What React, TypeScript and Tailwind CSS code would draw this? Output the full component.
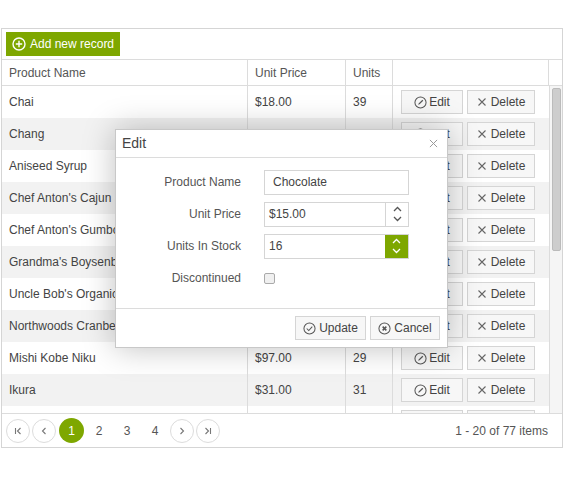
import React from "react";

const rows = [
  ["Chai", "$18.00", "39"],
  ["Chang", "$19.00", "17"],
  ["Aniseed Syrup", "$10.00", "13"],
  ["Chef Anton's Cajun Seasoning", "$22.00", "53"],
  ["Chef Anton's Gumbo Mix", "$21.35", "0"],
  ["Grandma's Boysenberry Spread", "$25.00", "120"],
  ["Uncle Bob's Organic Dried Pears", "$30.00", "15"],
  ["Northwoods Cranberry Sauce", "$40.00", "6"],
  ["Mishi Kobe Niku", "$97.00", "29"],
  ["Ikura", "$31.00", "31"],
  ["Queso Cabrales", "$21.00", "22"],
];

const EditIcon = () => (
  <svg width="13" height="13" viewBox="0 0 14 14" fill="none" stroke="#555" strokeWidth="1.1">
    <circle cx="7" cy="7" r="6" />
    <path d="M4.5 9.5 L5 8 L9 4 L10 5 L6 9 Z" fill="#555" stroke="none" />
  </svg>
);
const XIcon = () => (
  <svg width="10" height="10" viewBox="0 0 10 10" stroke="#666" strokeWidth="1.1">
    <path d="M1.5 1.5 L8.5 8.5 M8.5 1.5 L1.5 8.5" />
  </svg>
);
const Chev = ({ up, color }: { up: boolean; color: string }) => (
  <svg width="9" height="6" viewBox="0 0 9 6" fill="none" stroke={color} strokeWidth="1.3">
    <path d={up ? "M1 5 L4.5 1.5 L8 5" : "M1 1 L4.5 4.5 L8 1"} />
  </svg>
);

export default function App() {
  return (
    <div className="w-[564px] h-[500px] bg-white relative text-[12px] text-[#444]" style={{ fontFamily: "'Liberation Sans', Arial, sans-serif" }}>
      <div className="absolute left-[1px] top-[28px] w-[562px] h-[420px] border border-[#d5d5d5] flex flex-col">
        <div className="h-[31px] flex items-center px-[4px] border-b border-[#dcdcdc]">
          <div className="h-[24px] bg-[#7ea700] text-white flex items-center gap-[4px] px-[6px] text-[12px]">
            <svg width="14" height="14" viewBox="0 0 14 14" fill="none" stroke="white" strokeWidth="1.4">
              <circle cx="7" cy="7" r="6" />
              <path d="M7 3.8 V10.2 M3.8 7 H10.2" />
            </svg>
            Add new record
          </div>
        </div>
        <div className="h-[26px] flex border-b border-[#dcdcdc] text-[#555]">
          <div className="w-[246px] px-[7px] flex items-center border-r border-[#dcdcdc]">Product Name</div>
          <div className="w-[98px] px-[7px] flex items-center border-r border-[#dcdcdc]">Unit Price</div>
          <div className="w-[47px] px-[7px] flex items-center border-r border-[#dcdcdc]">Units</div>
          <div className="w-[156px] border-r border-[#dcdcdc]"></div>
          <div className="flex-1"></div>
        </div>
        <div className="flex-1 flex overflow-hidden">
          <div className="w-[547px] overflow-hidden">
            {rows.map((r, i) => (
              <div key={i} className={`h-[32px] flex shrink-0 ${i % 2 ? "bg-[#f2f2f2]" : "bg-white"}`}>
                <div className="w-[246px] px-[7px] flex items-center border-r border-[#dcdcdc] whitespace-nowrap overflow-hidden">{r[0]}</div>
                <div className="w-[98px] px-[7px] flex items-center border-r border-[#dcdcdc]">{r[1]}</div>
                <div className="w-[47px] px-[7px] flex items-center border-r border-[#dcdcdc]">{r[2]}</div>
                <div className="w-[156px] flex items-center gap-[4px] pl-[8px]">
                  <div className="w-[62px] h-[24px] border border-[#d5d5d5] bg-[#f7f7f7] flex items-center justify-center gap-[2px]"><EditIcon />Edit</div>
                  <div className="w-[68px] h-[24px] border border-[#d5d5d5] bg-[#f7f7f7] flex items-center justify-center gap-[4px]"><XIcon />Delete</div>
                </div>
              </div>
            ))}
          </div>
          <div className="flex-1 bg-[#f5f5f5] border-l border-[#dcdcdc] pt-[2px] flex justify-center">
            <div className="w-[9px] h-[163px] bg-[#cdcdcd] rounded-[2px] border border-[#bbb]"></div>
          </div>
        </div>
        <div className="h-[34px] border-t border-[#dcdcdc] flex items-center pl-[4px] pr-[14px]">
          <div className="flex items-center gap-[2px]">
            {["first", "prev"].map((k) => (
              <div key={k} className="w-[24px] h-[24px] rounded-full border border-[#dcdcdc] flex items-center justify-center">
                <svg width="10" height="10" viewBox="0 0 10 10" fill="none" stroke="#777" strokeWidth="1.1">
                  {k === "first" ? <path d="M2.5 2 V8 M7.5 2 L4.5 5 L7.5 8" /> : <path d="M6.5 2 L3.5 5 L6.5 8" />}
                </svg>
              </div>
            ))}
            <div className="w-[25px] h-[25px] rounded-full bg-[#7ea700] text-white flex items-center justify-center ml-[1px]">1</div>
            {["2", "3", "4"].map((p) => (
              <div key={p} className="w-[26px] h-[24px] flex items-center justify-center text-[#555]">{p}</div>
            ))}
            {["next", "last"].map((k) => (
              <div key={k} className="w-[24px] h-[24px] rounded-full border border-[#dcdcdc] flex items-center justify-center">
                <svg width="10" height="10" viewBox="0 0 10 10" fill="none" stroke="#777" strokeWidth="1.1">
                  {k === "last" ? <path d="M7.5 2 V8 M2.5 2 L5.5 5 L2.5 8" /> : <path d="M3.5 2 L6.5 5 L3.5 8" />}
                </svg>
              </div>
            ))}
          </div>
          <div className="ml-auto text-[#555]">1 - 20 of 77 items</div>
        </div>
      </div>

      <div className="absolute left-[115px] top-[129px] w-[333px] h-[219px] bg-white border border-[#c8c8c8] shadow-[0_0_30px_rgba(0,0,0,0.25)] flex flex-col">
        <div className="h-[28px] border-b border-[#dcdcdc] flex items-center px-[6px] text-[14px] text-[#444]">
          Edit
          <svg className="ml-auto mr-[3px]" width="9" height="9" viewBox="0 0 10 10" stroke="#999" strokeWidth="1.1"><path d="M1 1 L9 9 M9 1 L1 9" /></svg>
        </div>
        <div className="flex-1 flex flex-col gap-[8px] pt-[12px] text-[#555]">
          <div className="flex items-center h-[24px]">
            <div className="w-[125px] text-right">Product Name</div>
            <div className="ml-[23px] w-[145px] h-[25px] border border-[#d5d5d5] flex items-center px-[8px] text-[#444]">Chocolate</div>
          </div>
          <div className="flex items-center h-[24px]">
            <div className="w-[125px] text-right">Unit Price</div>
            <div className="ml-[23px] w-[145px] h-[25px] border border-[#d5d5d5] flex text-[#444]">
              <div className="flex-1 flex items-center px-[4px]">$15.00</div>
              <div className="w-[23px] border-l border-[#d5d5d5] flex flex-col items-center justify-center gap-[4px]"><Chev up color="#555" /><Chev up={false} color="#555" /></div>
            </div>
          </div>
          <div className="flex items-center h-[24px]">
            <div className="w-[125px] text-right">Units In Stock</div>
            <div className="ml-[23px] w-[145px] h-[25px] border border-[#d5d5d5] flex text-[#444]">
              <div className="flex-1 flex items-center px-[4px]">16</div>
              <div className="w-[23px] bg-[#7ea700] flex flex-col items-center justify-center gap-[4px]"><Chev up color="#fff" /><Chev up={false} color="#fff" /></div>
            </div>
          </div>
          <div className="flex items-center h-[24px]">
            <div className="w-[125px] text-right">Discontinued</div>
            <div className="ml-[23px] w-[11px] h-[11px] border border-[#aaa] rounded-[2px] bg-[#f0f0f0]"></div>
          </div>
        </div>
        <div className="h-[39px] border-t border-[#dcdcdc] flex items-center justify-end gap-[4px] pr-[7px]">
          <div className="w-[71px] h-[24px] border border-[#d5d5d5] bg-[#f7f7f7] flex items-center justify-center gap-[3px]">
            <svg width="13" height="13" viewBox="0 0 14 14" fill="none" stroke="#555" strokeWidth="1.1"><circle cx="7" cy="7" r="6" /><path d="M4 7 L6.2 9.2 L10 5" /></svg>Update
          </div>
          <div className="w-[70px] h-[24px] border border-[#d5d5d5] bg-[#f7f7f7] flex items-center justify-center gap-[3px]">
            <svg width="13" height="13" viewBox="0 0 14 14" fill="none" stroke="#555" strokeWidth="1.1"><circle cx="7" cy="7" r="6" /><path d="M5 5 L9 9 M9 5 L5 9" strokeWidth="1.6" /></svg>Cancel
          </div>
        </div>
      </div>
    </div>
  );
}
